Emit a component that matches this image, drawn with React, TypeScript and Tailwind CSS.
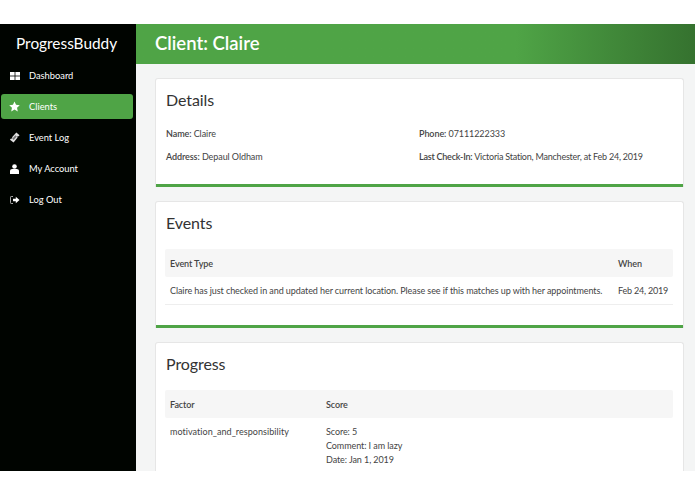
const font = { fontFamily: 'Lato, sans-serif' };

const navItems = [
  { label: 'Dashboard', icon: 'grid' },
  { label: 'Clients', icon: 'star', active: true },
  { label: 'Event Log', icon: 'ticket' },
  { label: 'My Account', icon: 'user' },
  { label: 'Log Out', icon: 'logout' },
];

const NavIcon = ({ name }: { name: string }) => {
  if (name === 'grid') {
    return (
      <svg width="10" height="8" viewBox="0 0 10 8" fill="#fff">
        <rect x="0" y="0" width="4.600" height="3.600" />
        <rect x="5.400" y="0" width="4.600" height="3.600" />
        <rect x="0" y="4.400" width="4.600" height="3.600" />
        <rect x="5.400" y="4.400" width="4.600" height="3.600" />
      </svg>
    );
  }
  if (name === 'star') {
    return (
      <svg width="11" height="11" viewBox="0 0 24 24" fill="#fff">
        <path d="M12 1l3.400 7.400 8.100.9-6 5.500 1.700 8L12 18.800 4.800 22.800l1.700-8-6-5.500 8.100-.9z" />
      </svg>
    );
  }
  if (name === 'ticket') {
    return (
      <svg width="11" height="11" viewBox="0 0 12 12">
        <path d="M8 .5l3.500 3-1 1.200c-.5-.3-1-.2-1.300.2-.3.400-.2.900.2 1.200L5 11.500 1 8.500l1.200-1.400c.4.300 1 .2 1.300-.2.300-.4.200-1-.2-1.300z" fill="#e0e0e0" />
        <path d="M7 3.600L8.500 5 5.100 8.800 3.600 7.400z" fill="#777" />
      </svg>
    );
  }
  if (name === 'user') {
    return (
      <svg width="9" height="10" viewBox="0 0 9 10" fill="#fff">
        <circle cx="4.500" cy="2.500" r="2.300" />
        <path d="M0 10V7C0 5.800 1 5.200 2.200 5h4.600C8 5.200 9 5.800 9 7v3z" />
      </svg>
    );
  }
  return (
    <svg width="10" height="8" viewBox="0 0 10 8" fill="none">
      <path d="M3 .5H1.200a.7.7 0 0 0-.7.700v5.600a.7.7 0 0 0 .7.700H3" stroke="#aaa" />
      <path d="M3 2.800h2.800V.8L9.500 4 5.800 7.200V5.200H3z" fill="#fff" />
    </svg>
  );
};

const Card = ({ title, children }: { title: string; children: React.ReactNode }) => (
  <section className="bg-white rounded-t-[3px] border border-[#e6e6e6] border-b-0">
    <h2 className="pl-[10px] pt-[9px] text-[16px] leading-[24px] text-[#333]">{title}</h2>
    {children}
    <div className="h-[3px] bg-[#4fa446]" />
  </section>
);

export default function App() {
  return (
    <div style={font} className="w-[695px] h-[494px] bg-white pt-[24px] pb-[23px] overflow-hidden">
      <div className="flex h-[447px] overflow-hidden">
        <aside className="w-[136px] shrink-0 bg-[#000400] text-white">
          <div className="h-[39px] pl-[16px] flex items-center text-[15.400px]">ProgressBuddy</div>
          <nav className="flex flex-col">
            {navItems.map((item) => (
              <div
                key={item.label}
                className={`h-[25px] mb-[6px] ml-[1px] mr-[3px] flex items-center rounded-[3px] text-[9.300px] ${item.active ? 'bg-[#4fa446]' : ''}`}
              >
                <span className="w-[28px] flex justify-center pr-[1px]">
                  <NavIcon name={item.icon} />
                </span>
                <span>{item.label}</span>
              </div>
            ))}
          </nav>
        </aside>
        <div className="flex-1 bg-[#f4f5f5] overflow-hidden">
          <header className="h-[40px] pl-[19px] flex items-center text-white text-[18.500px] font-semibold bg-gradient-to-r from-[#4fa446] from-68% to-[#35722f]">
            Client: Claire
          </header>
          <main className="pl-[19px] pr-[11px] pt-[14px] flex flex-col gap-[14px] text-[9px] tracking-[-0.08px] text-[#444]">
            <Card title="Details">
              <div className="grid grid-cols-[253px_1fr] pl-[10px] pt-[17px] pb-[22px] gap-y-[13px] leading-[10px]">
                <div><b className="font-semibold">Name:</b> Claire</div>
                <div><b className="font-semibold">Phone:</b> 07111222333</div>
                <div><b className="font-semibold">Address:</b> Depaul Oldham</div>
                <div className="tracking-[-0.22px]"><b className="font-semibold">Last Check-In:</b> Victoria Station, Manchester, at Feb 24, 2019</div>
              </div>
            </Card>
            <Card title="Events">
              <div className="pl-[9px] pr-[10px] pt-[14px] pb-[20px]">
                <div className="flex h-[28px] pt-[1px] items-center bg-[#f6f6f6] rounded-[2px] px-[5px] font-semibold">
                  <span className="w-[448px]">Event Type</span>
                  <span>When</span>
                </div>
                <div className="flex h-[28px] items-center border-b border-[#eee] px-[5px]">
                  <span className="w-[448px] whitespace-nowrap">Claire has just checked in and updated her current location. Please see if this matches up with her appointments.</span>
                  <span className="whitespace-nowrap tracking-[-0.2px]">Feb 24, 2019</span>
                </div>
              </div>
            </Card>
            <Card title="Progress">
              <div className="pl-[9px] pr-[10px] pt-[14px] pb-[20px]">
                <div className="flex h-[28px] pt-[1px] items-center bg-[#f6f6f6] rounded-[2px] px-[5px] font-semibold">
                  <span className="w-[156px]">Factor</span>
                  <span>Score</span>
                </div>
                <div className="flex px-[5px] pt-[7px] leading-[14px]">
                  <span className="w-[156px] tracking-[0.05px]">motivation_and_responsibility</span>
                  <div>
                    <div>Score: 5</div>
                    <div>Comment: I am lazy</div>
                    <div>Date: Jan 1, 2019</div>
                  </div>
                </div>
              </div>
            </Card>
          </main>
        </div>
      </div>
    </div>
  );
}
